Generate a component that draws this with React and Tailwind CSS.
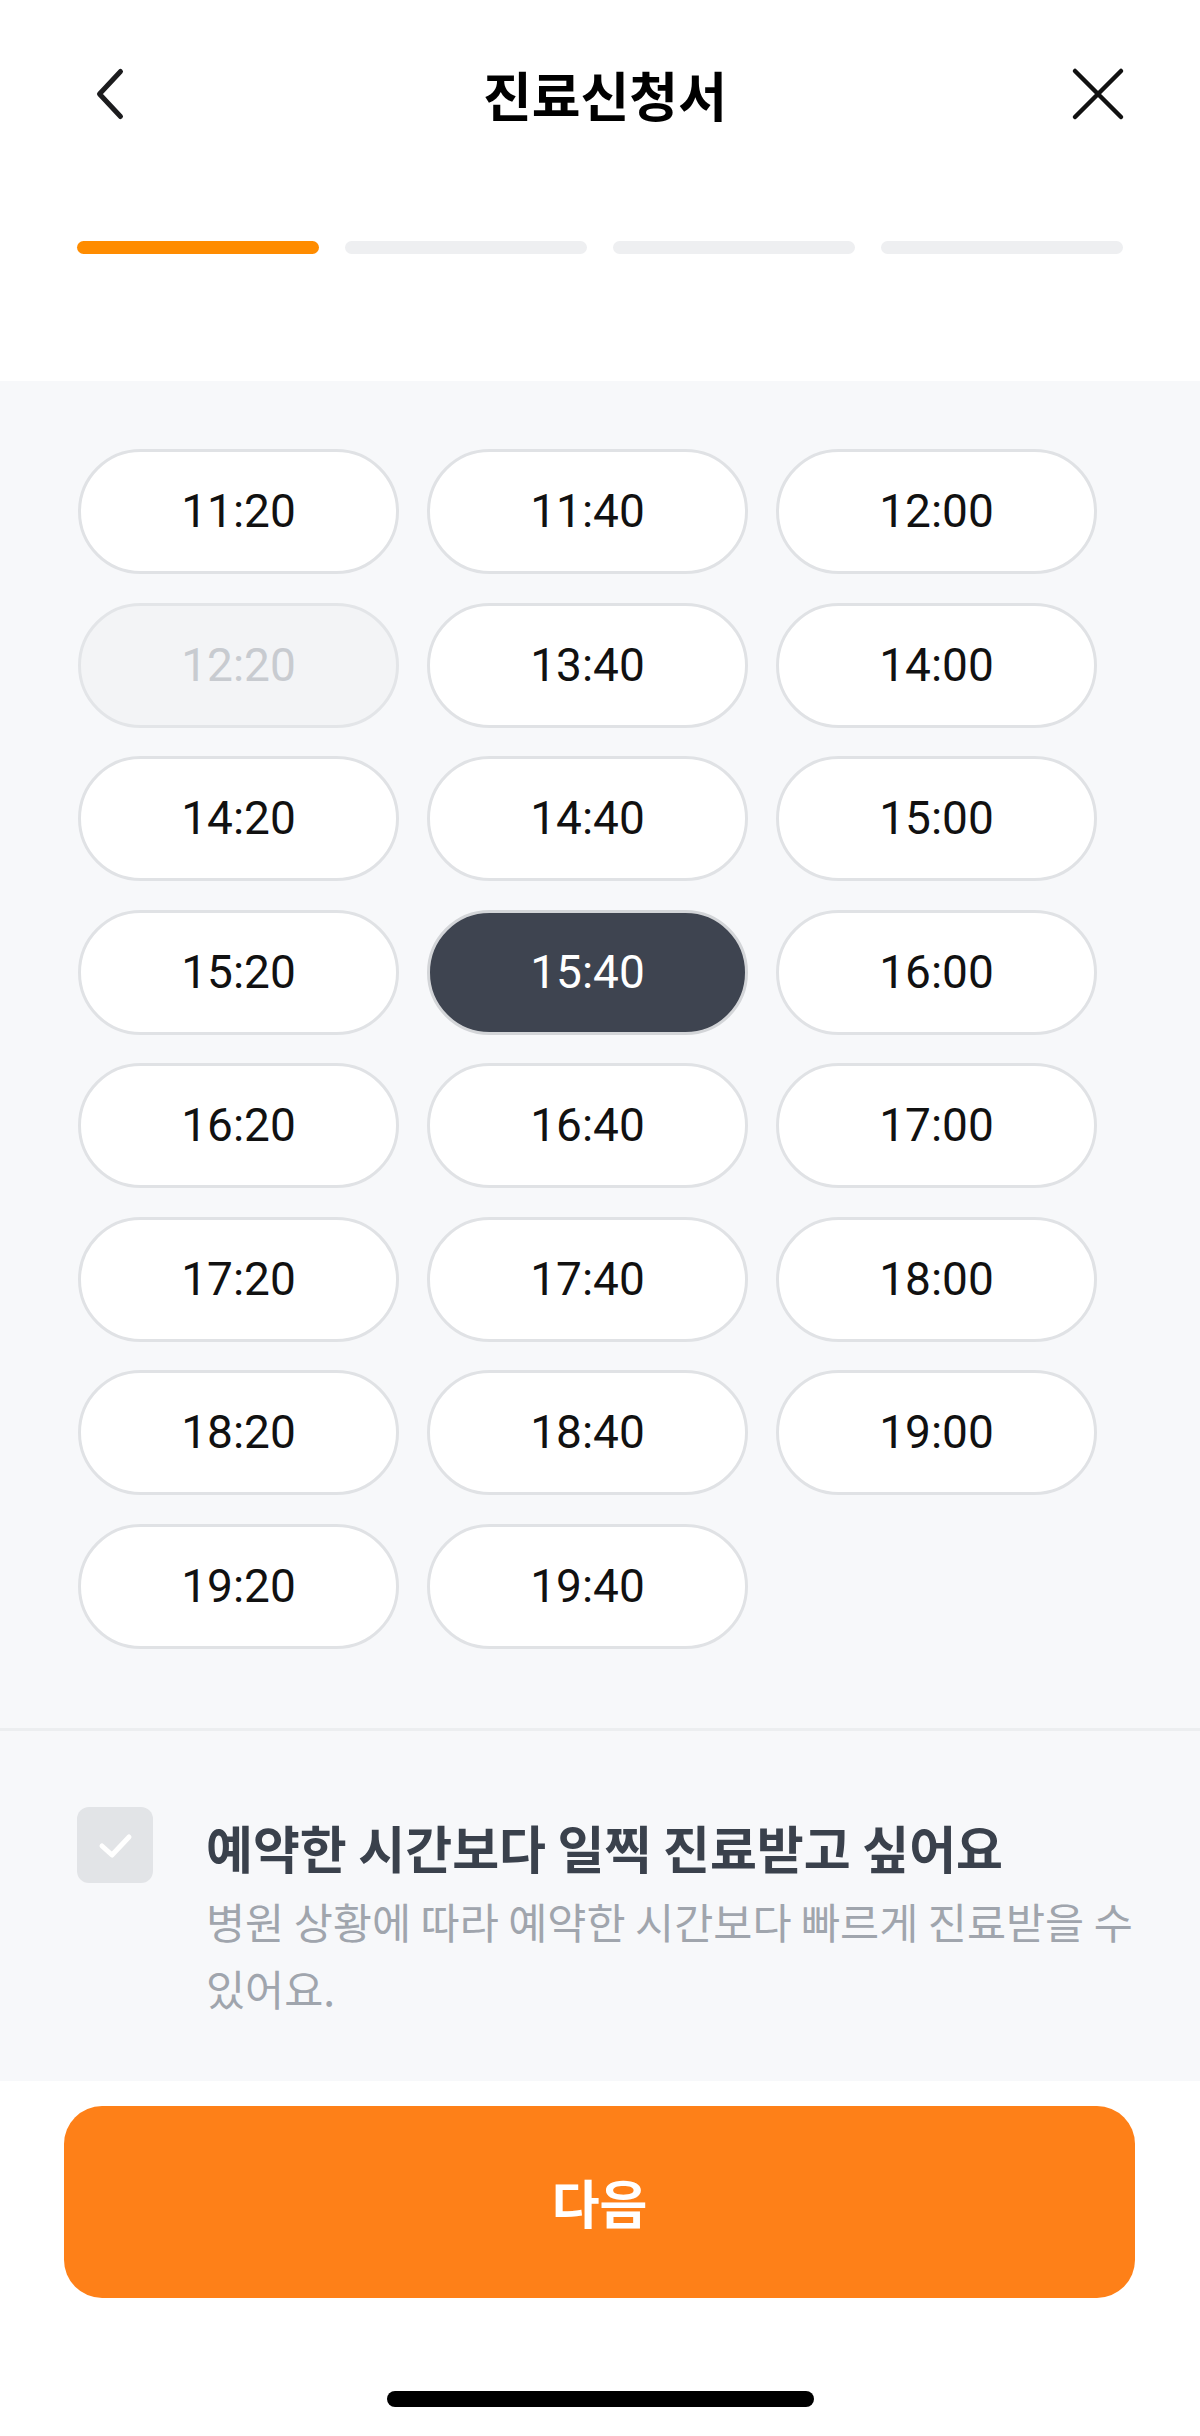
import React from "react";

const times = [
  "11:20", "11:40", "12:00",
  "12:20", "13:40", "14:00",
  "14:20", "14:40", "15:00",
  "15:20", "15:40", "16:00",
  "16:20", "16:40", "17:00",
  "17:20", "17:40", "18:00",
  "18:20", "18:40", "19:00",
  "19:20", "19:40",
];

function Chip({ t }) {
  if (t === "12:20") {
    return (
      <div className="h-[125px] rounded-full border-[3px] border-[#e3e5e8] bg-[#f3f4f6] flex items-center justify-center text-[46px] font-normal text-[#c8cbd0] font-['Roboto',sans-serif]">
        {t}
      </div>
    );
  }
  if (t === "15:40") {
    return (
      <div className="h-[125px] rounded-full border-[3px] border-[#d3d5d8] bg-[#3e4450] flex items-center justify-center text-[46px] font-normal text-white font-['Roboto',sans-serif]">
        {t}
      </div>
    );
  }
  return (
    <div className="h-[125px] rounded-full border-[3px] border-[#e0e2e5] bg-white flex items-center justify-center text-[46px] font-normal text-[#111111] font-['Roboto',sans-serif]">
      {t}
    </div>
  );
}

export default function App() {
  return (
    <div className="w-[1200px] h-[2436px] bg-white font-['Noto_Sans_CJK_KR','Noto_Sans',sans-serif] flex flex-col">
      {/* Header */}
      <div className="h-[188px] flex items-center justify-between pl-[94px] pr-[74px]">
        <svg width="32" height="56" viewBox="0 0 32 56" fill="none">
          <path d="M26.5 5.5 L5.5 28 L26.5 50.5" stroke="#1c1c1e" strokeWidth="5" strokeLinecap="round" strokeLinejoin="round" />
        </svg>
        <div className="ml-[14px] text-[53px] font-bold text-black leading-none">진료신청서</div>
        <svg width="56" height="56" viewBox="0 0 56 56" fill="none">
          <path d="M5 5 L51 51 M51 5 L5 51" stroke="#111111" strokeWidth="4.5" strokeLinecap="round" />
        </svg>
      </div>

      {/* Progress */}
      <div className="mt-[53px] flex gap-[26px] px-[77px]">
        <div className="flex-1 h-[13px] rounded-full bg-[#ff8c00]" />
        <div className="flex-1 h-[13px] rounded-full bg-[#eeeff1]" />
        <div className="flex-1 h-[13px] rounded-full bg-[#eeeff1]" />
        <div className="flex-1 h-[13px] rounded-full bg-[#eeeff1]" />
      </div>

      {/* Gray section */}
      <div className="mt-[127px] bg-[#f7f8fa]">
        <div className="pt-[68px] pb-[79px] pl-[78px]">
          <div className="grid grid-cols-[321px_321px_321px] gap-x-[28px] gap-y-[28.5px]">
            {times.map((t) => (
              <Chip key={t} t={t} />
            ))}
          </div>
        </div>
        <div className="h-[3px] bg-[#eceef0]" />
        <div className="pt-[76px] pb-[60px] pl-[77px] flex gap-[53px]">
          <div className="w-[76px] h-[76px] shrink-0 rounded-[12px] bg-[#e2e4e7] flex items-center justify-center">
            <svg width="44" height="44" viewBox="0 0 44 44" fill="none">
              <path d="M9 23 L19 32 L36 14" stroke="white" strokeWidth="5" strokeLinecap="round" strokeLinejoin="round" />
            </svg>
          </div>
          <div className="pt-[10px]">
            <div className="text-[51px] leading-[60px] font-bold text-[#3a414c] whitespace-nowrap">
              예약한 시간보다 일찍 진료받고 싶어요
            </div>
            <div className="mt-[10px] text-[42.5px] leading-[67px] text-[#a0a5ad] whitespace-nowrap">
              병원 상황에 따라 예약한 시간보다 빠르게 진료받을 수
              <br />
              있어요.
            </div>
          </div>
        </div>
      </div>

      {/* Bottom */}
      <div className="mt-[25px] px-[64px]">
        <div className="w-[1071px] h-[192px] rounded-[38px] bg-[#fe8018] flex items-center justify-center text-[52px] font-semibold text-white">
          다음
        </div>
      </div>
      <div className="mt-[93px] flex justify-center">
        <div className="w-[427px] h-[16px] rounded-full bg-black" />
      </div>
    </div>
  );
}
